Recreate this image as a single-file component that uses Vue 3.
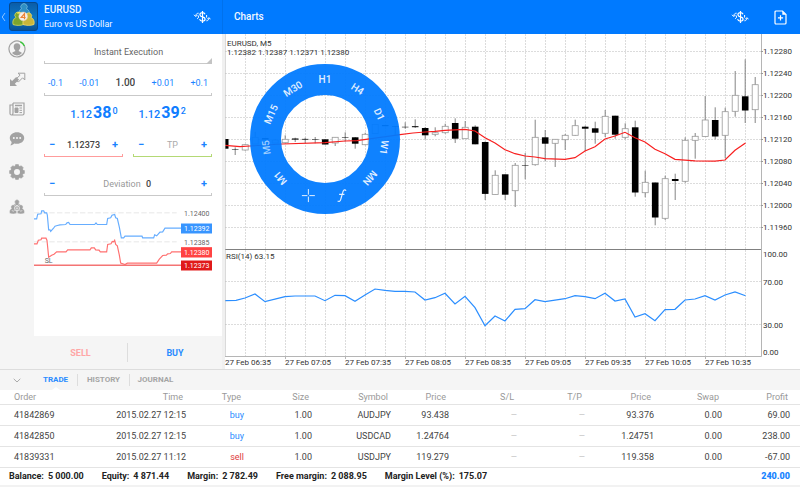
<script setup>
import { ref } from 'vue'

const volume = ref('1.00')
const stopLoss = ref('1.12373')
const takeProfit = ref('')
const deviation = ref('0')
const activeTab = ref('Trade')

const volumeSteps = {
  down: ['-0.1', '-0.01'],
  up: ['+0.01', '+0.1'],
}

const tabs = ['Trade', 'History', 'Journal']
const columns = ['Order', 'Time', 'Type', 'Size', 'Symbol', 'Price', 'S/L', 'T/P', 'Price', 'Swap', 'Profit']
const orders = [
  { id: '41842869', time: '2015.02.27 12:15', type: 'buy', size: '1.00', symbol: 'AUDJPY', open: '93.438', price: '93.376', swap: '0.00', profit: '69.00' },
  { id: '41842850', time: '2015.02.27 12:15', type: 'buy', size: '1.00', symbol: 'USDCAD', open: '1.24764', price: '1.24751', swap: '0.00', profit: '238.00' },
  { id: '41839331', time: '2015.02.27 11:12', type: 'sell', size: '1.00', symbol: 'USDJPY', open: '119.279', price: '119.358', swap: '0.00', profit: '-67.00' },
]
const summary = [
  ['Balance:', '5 000.00'],
  ['Equity:', '4 871.44'],
  ['Margin:', '2 782.49'],
  ['Free margin:', '2 088.95'],
  ['Margin Level (%):', '175.07'],
]

const wheel = ['H1', 'H4', 'D1', 'W1', 'MN', 'function', 'crosshair', 'M1', 'M5', 'M15', 'M30'].map((name, i) => ({
  name,
  angle: (i * 360) / 11,
}))

const gridX = Array.from({ length: 26 }, (_, i) => 245 + i * 20)
const priceLevels = ['1.12280', '1.12240', '1.12200', '1.12160', '1.12120', '1.12080', '1.12040', '1.12000', '1.11960'].map(
  (label, i) => ({ label, y: 51.5 + i * 22 }),
)
const rsiLevels = [
  { label: '100.00', y: 254 },
  { label: '70.00', y: 281.5 },
  { label: '30.00', y: 324.5 },
  { label: '0.00', y: 352 },
]
const times = ['06:35', '07:05', '07:35', '08:05', '08:35', '09:05', '09:35', '10:05', '10:35'].map((t, i) => ({
  label: '27 Feb ' + t,
  x: 225 + i * 60,
}))

// [filled, high, body top, body bottom, low]
const candles = [
  [1, 139, 139, 148.7, 148.7], [1, 147.3, 149.3, 149.8, 155], [0, 144, 144.7, 150, 150.7], [0, 131.7, 137.3, 144, 144],
  [1, 138, 138, 139.5, 139.5], [0, 139, 140, 143, 143], [0, 135.3, 139.3, 142.7, 143.3], [1, 137.7, 138.5, 139.6, 142],
  [1, 137.7, 138.9, 139.6, 143.3], [1, 137, 139.4, 139.9, 143.3], [1, 139.3, 139.3, 144.5, 144.5], [0, 137.3, 137.3, 143, 146],
  [1, 132.3, 137.2, 137.7, 141.7], [1, 137, 137.3, 143.7, 148.7], [0, 132.7, 134.3, 144.7, 145.3], [0, 124.3, 124.3, 133.5, 133.5],
  [1, 125, 125, 126.2, 126.2], [1, 126, 126, 126.6, 135], [1, 122.3, 126.8, 127.3, 128.7], [1, 119.3, 126.2, 127.2, 128],
  [1, 127, 128, 135.3, 139.3], [0, 127.3, 132.7, 134.3, 136.3], [0, 123.7, 126.3, 132.7, 133.7], [1, 118.3, 123, 138.7, 143],
  [0, 121, 127.3, 138.7, 138.7], [1, 125.3, 126.7, 144.3, 144.3], [1, 141.3, 142, 193.9, 200], [0, 170.3, 175.3, 194.5, 194.5],
  [1, 174.3, 174.3, 194.7, 200], [0, 163, 165.3, 190.7, 207], [1, 153, 165, 165.5, 179.3], [0, 119.7, 137.3, 164.7, 165.7],
  [1, 130, 137.3, 143.7, 161], [0, 139.3, 139.3, 143.3, 167], [0, 134, 135.3, 139.7, 150], [0, 119.7, 125.7, 135.3, 135.7],
  [1, 125.7, 126.7, 128.7, 151], [1, 121.7, 128.3, 132.7, 143.7], [0, 110, 116.3, 133.3, 137], [1, 115.7, 115.7, 134.7, 138.7],
  [0, 123.3, 128.7, 137.3, 139.3], [1, 120.7, 127.3, 192.5, 196.7], [0, 170.7, 182.3, 192.7, 197.3], [1, 182.5, 182.5, 217.5, 225.3],
  [0, 175.7, 178.7, 218.3, 220], [1, 173.7, 179, 181, 200], [0, 137.3, 140.3, 181.3, 182.7], [0, 133, 136.3, 140.3, 158.7],
  [0, 96, 120, 136.5, 136.5], [1, 107.3, 120, 136.5, 139.3], [0, 107.7, 111.7, 135.3, 158.3], [0, 71, 95.3, 111.3, 116.7],
  [1, 59.3, 96.3, 110.5, 123], [0, 77, 84.7, 109.7, 123],
].map(([filled, high, top, bottom, low], i) => ({ filled, high, top, bottom, low, x: 225.2 + i * 10 }))

const average =
  '225,145.3 240,146.7 250,146 282,144 325,142.7 345,141 357,140.7 400,134.7 413,133 425,132 435,131.3 445,130.3 465,129.3 475,131 485,137.7 495,143 505,149.7 515,153.7 525,156 535,157 545,158.7 565,159.3 575,157.7 585,151 595,146.7 605,139 615,136 625,132.3 635,137.7 645,142 655,149.3 665,153.7 675,159.3 695,160.8 715,161.2 725,160 735,150.3 745.5,143'
const rsi =
  '225,300.7 236,300.3 245,298 255,294 265,301.7 285,296.7 295,296 315,296 325,300.7 335,295.3 345,295.7 355,301.3 365,295 375,289 385,290.3 395,291.3 405,291.3 415,292 425,300 435,297.7 445,293.3 455,304 465,296.3 475,307.7 485,325.7 495,316 505,321 515,309.3 525,308.7 535,299.7 545,301.7 565,298.7 575,295.7 585,296.7 595,298.7 605,293.3 615,301 625,299 635,317 645,313.7 655,320.7 665,309.7 675,309.3 685,300 695,299 705,295.7 715,300 725,295 735,292 745.5,295.7'
const askTicks =
  '102,73 110,73 113,59 123,58 125,49 131,49 134,55 140,55 142,62 146,106 150,106 152,111 160,102 165,95 172,93 180,91 197,90 201,85 206,84 210,90 284,90 288,85 292,90 320,90 323,72 332,70 336,62 344,60 347,70 352,72 358,98 364,130 371,130 375,125 426,125 428,130 461,130 464,121 470,124 480,113 488,112 495,101 543,101'
const bidTicks =
  '102,148 111,148 115,137 123,136 125,131 138,131 141,138 146,188 155,182 162,179 170,172 198,172 203,166 270,166 274,160 283,160 287,166 297,167 301,172 320,172 323,150 333,148 337,141 341,142 344,137 347,150 352,154 358,182 362,206 375,210 382,206 470,206 478,194 488,183 499,182 503,178 511,177 515,172 543,172'
</script>

<template>
  <div class="app">
    <header class="topbar">
      <div class="instrument">
        <button class="back" aria-label="Back">
          <svg width="5" height="10" viewBox="0 0 5 10"><path d="M4 1 1.2 5 4 9" fill="none" stroke="#8cc4ff" stroke-width="1" /></svg>
        </button>
        <svg class="logo" width="29" height="29" viewBox="0 0 29 29">
          <defs>
            <linearGradient id="tile" x1="0" y1="0" x2="0" y2="1">
              <stop offset="0" stop-color="#0a5ca8" />
              <stop offset=".55" stop-color="#0e78c4" />
              <stop offset="1" stop-color="#075094" />
            </linearGradient>
          </defs>
          <rect x=".5" y=".5" width="28" height="28" rx="2.500" fill="url(#tile)" stroke="#06488c" />
          <path d="M9.500 15c-.5-4.500.8-7 3-8.200a3.200 3.200 0 1 1 5 0c2.800 1.200 3.700 4 3 8.200z" fill="#2f8fc4" stroke="#8cc8e0" stroke-width=".6" />
          <path d="M4 22.500c-.8-3.500.6-6 3-7a3 3 0 1 1 4.600-1.200c2.500 1.200 3.700 4 3 8.200-3 1.200-8 1.200-10.600 0z" fill="#7da52e" stroke="#d9db5c" stroke-width=".8" />
          <path d="M14 22.500c-.6-3.500.8-6 3.200-7.200a2.900 2.900 0 1 1 4.800.2c2.500 1 3.700 3.500 3 7-3 1.200-8.300 1.200-11 0z" fill="#c9b63a" stroke="#f3dc6a" stroke-width=".8" />
          <path d="M8.500 11.500c1.200-1.500 3-1.200 3.500 0" fill="none" stroke="#f5e45e" stroke-width="1.500" />
          <circle cx="14.200" cy="14.400" r="4.400" fill="#f6efe6" stroke="#ddcdb8" stroke-width=".5" />
          <path d="M15.500 17.200v-5.500l-3.300 3.800h4.400" fill="none" stroke="#ec8334" stroke-width="1.200" />
        </svg>
        <div class="names">
          <h1>EURUSD</h1>
          <p>Euro vs US Dollar</p>
        </div>
        <button class="icon-button" aria-label="Switch symbol">
          <svg width="18" height="14" viewBox="0 0 18 14" fill="none" stroke="#fff">
            <path d="M12 4.300C11.600 3.200 10.600 2.700 9.400 2.700c-1.500 0-2.500.8-2.500 2 0 2.900 5.200 1.600 5.200 4.300 0 1.300-1.200 2.100-2.700 2.100-1.400 0-2.500-.7-2.800-2M9.500 1v12" stroke-width="1.200" />
            <path d="M5.600 3.200C4 3.200 3 4 2.800 5.800M1 4.800l1.800 1.800 1.800-1.800M5.400 5.600v2.200l-1.200 1M13.400 10.800c1.600 0 2.400-1 2.500-2.600M14.200 9.300l1.700-1.700 1.600 1.700M13.600 5v2.600" />
          </svg>
        </button>
      </div>
      <div class="chart-head">
        <h2>Charts</h2>
        <button class="icon-button" aria-label="Select symbol">
          <svg width="18" height="14" viewBox="0 0 18 14" fill="none" stroke="#fff">
            <path d="M12 4.300C11.600 3.200 10.600 2.700 9.400 2.700c-1.500 0-2.500.8-2.500 2 0 2.900 5.200 1.600 5.200 4.300 0 1.300-1.200 2.100-2.700 2.100-1.400 0-2.500-.7-2.800-2M9.500 1v12" stroke-width="1.200" />
            <path d="M5.600 3.200C4 3.200 3 4 2.800 5.800M1 4.800l1.800 1.800 1.800-1.800M5.400 5.600v2.200l-1.200 1M13.400 10.800c1.600 0 2.400-1 2.500-2.600M14.200 9.300l1.700-1.700 1.600 1.700M13.600 5v2.600" />
          </svg>
        </button>
        <button class="icon-button" aria-label="New chart">
          <svg width="13" height="15" viewBox="0 0 13 15" fill="none" stroke="#fff" stroke-width="1.200">
            <path d="M2 1h6.500L12 4.500V13a1 1 0 0 1-1 1H2a1 1 0 0 1-1-1V2a1 1 0 0 1 1-1zM6.500 5.200v5.200M3.900 7.800h5.200" />
            <path d="M8.300 1v3.700H12z" fill="#fff" stroke="none" />
          </svg>
        </button>
      </div>
    </header>

    <main class="workspace">
      <nav class="sidebar" aria-label="Sections">
        <button aria-label="Account">
          <svg width="18" height="18" viewBox="0 0 18 18">
            <path d="M12.300 1.700A8 8 0 1 0 16.400 6" fill="none" stroke="#a2a2a2" stroke-width="1.200" />
            <path d="M12.300 1.700A8 8 0 0 1 16.400 6" fill="none" stroke="#38c138" stroke-width="1.500" />
            <path d="M9 3.300c2.200 0 3.300 1.500 3.300 3.500 0 1.500-.6 2.800-1.500 3.500v1c1.200.5 2.500.8 3.200 1.700A6.300 6.300 0 0 1 9 15.500 6.300 6.300 0 0 1 4 13c.7-.9 2-1.200 3.200-1.700v-1C6.300 9.600 5.700 8.300 5.700 6.800c0-2 1.100-3.500 3.300-3.500z" fill="#a2a2a2" />
          </svg>
        </button>
        <button aria-label="Trade">
          <svg width="17" height="15" viewBox="0 0 17 15">
            <path d="M9 1.200h6.800V8l-2.200-2.200-4.300 4.300-2.700-2.700 4.500-4.200z" fill="#f5f5f5" stroke="#a2a2a2" />
            <path d="M1 7v7h7l-2.200-2.300 4.300-4L7.200 4.900 3.100 9z" fill="#a2a2a2" />
          </svg>
        </button>
        <button aria-label="News">
          <svg width="16" height="14" viewBox="0 0 16 14" fill="none" stroke="#a2a2a2">
            <path d="M4 1h11v10.500q0 1.500-1.500 1.500h-11Q1 13 1 11.500V3h2.500M4 1v10q0 2-1.500 2" stroke-width="1.200" />
            <path d="M6 3.500h7" stroke-width="1.500" />
            <path d="M6 6h3v4.500H6z" fill="#a2a2a2" />
            <path d="M10.500 6H13M10.500 8.300H13M10.500 10.600H13" />
          </svg>
        </button>
        <button aria-label="Messages">
          <svg width="16" height="16" viewBox="0 0 16 16">
            <path d="M8 1.200c4 0 7.200 2.500 7.200 5.800S12 12.800 8 12.800c-1 0-2-.1-2.800-.4-1 1-2.400 1.800-3.900 1.900.8-.9 1.300-2 1.300-3.300C1.400 9.900.8 8.500.8 7 .8 3.700 4 1.200 8 1.200z" fill="#a2a2a2" />
            <circle v-for="x in [4.8, 8, 11.2]" :key="x" :cx="x" cy="7" r="1" fill="#f5f5f5" />
          </svg>
        </button>
        <button class="tall" aria-label="Settings">
          <svg width="16" height="16" viewBox="0 0 16 16">
            <circle cx="8" cy="8" r="4.600" fill="none" stroke="#a2a2a2" stroke-width="3.200" />
            <path v-for="n in 8" :key="n" d="M6 2.500 6.600.6h2.800L10 2.500z" fill="#a2a2a2" stroke="#a2a2a2" stroke-width=".6" :transform="`rotate(${n * 45} 8 8)`" />
          </svg>
        </button>
        <button class="tall" aria-label="Community">
          <svg width="16" height="16" viewBox="0 0 16 16" fill="#a2a2a2" stroke="#f5f5f5" stroke-width=".4">
            <path d="M4.300 8.500c-.2-2 .6-3.300 2-4a2.300 2.300 0 1 1 3.400 0c1.400.7 2.200 2 2 4z" />
            <path d="M.6 14.300c-.4-2.300.4-4 1.900-4.800a2.200 2.200 0 1 1 3.200 0c1.500.8 2.300 2.500 2 4.800-2 .8-5 .8-7.100 0z" />
            <path d="M8.300 14.300c-.3-2.300.5-4 2-4.800a2.200 2.200 0 1 1 3.200 0c1.500.8 2.300 2.500 1.900 4.800-2.100.8-5.100.8-7.100 0z" />
            <circle cx="8" cy="9.300" r="2.500" stroke-width=".8" />
            <path d="M8 7.700v3.200M6.500 9.300h3M6.300 5.500 8 7l1.700-1.500M2.800 11l1.400 1.500L5.600 11M10.500 11l1.400 1.500 1.400-1.500" fill="none" stroke-width=".6" />
          </svg>
        </button>
      </nav>

      <section class="order-panel" aria-label="New order">
        <div class="fields">
          <div class="field execution">
            <select aria-label="Execution type">
              <option>Instant Execution</option>
            </select>
            <div class="rule"></div>
            <svg class="corner" width="6" height="6" viewBox="0 0 6 6"><path d="M6 0v6H0z" fill="#c4c4c4" /></svg>
          </div>
          <div class="field volume">
            <div class="volume-row">
              <button v-for="s in volumeSteps.down" :key="s">{{ s }}</button>
              <input v-model="volume" aria-label="Volume" />
              <button v-for="s in volumeSteps.up" :key="s">{{ s }}</button>
            </div>
            <div class="rule"></div>
          </div>
          <div class="quotes">
            <p class="quote">1.12<b>38</b><sup>0</sup></p>
            <p class="quote">1.12<b>39</b><sup>2</sup></p>
          </div>
          <div class="limits">
            <div class="field">
              <div class="stepper">
                <button aria-label="Decrease stop loss">−</button>
                <input v-model="stopLoss" class="strong" aria-label="Stop loss" />
                <button aria-label="Increase stop loss">+</button>
              </div>
              <div class="rule red"></div>
            </div>
            <div class="field">
              <div class="stepper">
                <button aria-label="Decrease take profit">−</button>
                <input v-model="takeProfit" placeholder="TP" aria-label="Take profit" />
                <button aria-label="Increase take profit">+</button>
              </div>
              <div class="rule green"></div>
            </div>
          </div>
          <div class="field deviation">
            <div class="stepper">
              <button aria-label="Decrease deviation">−</button>
              <div class="deviation-value">
                <label for="deviation">Deviation</label>
                <input id="deviation" v-model="deviation" class="strong" />
              </div>
              <button aria-label="Increase deviation">+</button>
            </div>
            <div class="rule"></div>
          </div>
        </div>

        <svg class="ticks" viewBox="102 6 564 417" role="img" aria-label="Tick chart">
          <path d="M102 55H530M102 142H530" stroke="#e2e2e2" stroke-width="2.500" stroke-dasharray="16 7" />
          <g fill="none" stroke-width="3.500">
            <polyline :points="askTicks" stroke="#66adff" />
            <polyline :points="bidTicks" stroke="#ff7070" />
            <path d="M102 212H543" stroke="#f47474" stroke-width="4.500" />
          </g>
          <path d="M543 87h93v30h-93z" fill="#3895ff" />
          <path d="M543 158h93v31h-93z" fill="#ff4343" />
          <path d="M543 198h93v30h-93z" fill="#e01a1a" />
          <g class="tick-labels">
            <text x="552" y="63">1.12400</text>
            <text x="552" y="150">1.12385</text>
            <text x="134" y="206">SL</text>
            <g class="on-color">
              <text x="552" y="110">1.12392</text>
              <text x="552" y="181">1.12380</text>
              <text x="552" y="221">1.12373</text>
            </g>
          </g>
        </svg>

        <div class="deal">
          <button class="sell" disabled>SELL</button>
          <button class="buy">BUY</button>
        </div>
      </section>

      <section class="chart" aria-label="EURUSD, M5 chart">
        <svg class="plot" viewBox="225 34 575 335">
          <g stroke="#dcdcdc" stroke-width="1" stroke-dasharray="2 1">
            <path v-for="x in gridX" :key="x" :d="`M${x + 0.5} 34V356`" />
            <path v-for="l in priceLevels" :key="l.label" :d="`M225 ${l.y}H761`" />
            <path d="M225 281.500H761M225 324.500H761" />
          </g>
          <g v-for="c in candles" :key="c.x">
            <path :d="`M${c.x} ${c.high}V${c.low}`" stroke="#777" stroke-width=".9" />
            <rect v-if="c.filled" :x="c.x - 3.3" :y="c.top" width="6.600" :height="c.bottom - c.top" fill="#000" />
            <rect v-else :x="c.x - 3" :y="c.top" width="6" :height="c.bottom - c.top" fill="#fff" stroke="#999" stroke-width=".8" />
          </g>
          <polyline :points="average" fill="none" stroke="#f81f1f" stroke-width="1.200" />
          <polyline :points="rsi" fill="none" stroke="#2b8eff" stroke-width="1.200" />
          <path d="M225 249.500H761" stroke="#808080" />
          <path d="M225 34V356.500H761.500V34M285.500 356v3M345.500 356v3M405.500 356v3M465.500 356v3M525.500 356v3M585.500 356v3M645.500 356v3M705.500 356v3" fill="none" stroke="#b5b5b5" />
          <path v-for="l in priceLevels" :key="l.label" :d="`M761 ${l.y}h2`" stroke="#999" />
          <g class="plot-labels">
            <text x="227" y="46">EURUSD, M5</text>
            <text x="227" y="55">1.12382 1.12387 1.12371 1.12380</text>
            <text x="226" y="259">RSI(14) 63.15</text>
            <text v-for="l in priceLevels" :key="l.label" x="763" :y="l.y + 2.5">{{ l.label }}</text>
            <text v-for="l in rsiLevels" :key="l.label" x="763" :y="l.y + 3">{{ l.label }}</text>
            <text v-for="t in times" :key="t.label" :x="t.x" y="365">{{ t.label }}</text>
          </g>
        </svg>
        <div class="wheel">
          <button
            v-for="w in wheel"
            :key="w.name"
            :class="{ current: w.name === 'M5' }"
            :aria-label="w.name"
            :style="{ transform: `rotate(${w.angle}deg) translateY(-59px)` }"
          >
            <svg v-if="w.name === 'function'" width="14" height="14" viewBox="-7 -7 14 14" fill="none" stroke="#e3f0ff" stroke-width="1.200">
              <g :transform="`rotate(${-w.angle})`"><path d="M4.500-5C3-6.600 1.700-5.400 1.200-3.400L-.8 3.500C-1.300 5.600-2.600 6.600-4 5.300M-2.500-1.200h5.300" /></g>
            </svg>
            <svg v-else-if="w.name === 'crosshair'" width="14" height="14" viewBox="-7 -7 14 14" stroke="#e3f0ff">
              <g :transform="`rotate(${-w.angle})`"><path d="M0-6.500V-1M0 1v5.500M-6.500 0H-1M1 0h5.500" /></g>
            </svg>
            <template v-else>{{ w.name }}</template>
          </button>
        </div>
      </section>
    </main>

    <section class="terminal" aria-label="Terminal">
      <div class="tabs">
        <button class="collapse" aria-label="Collapse">
          <svg width="8" height="5" viewBox="0 0 8 5"><path d="M.7.8 4 4 7.300.8" fill="none" stroke="#aaa" /></svg>
        </button>
        <button v-for="t in tabs" :key="t" class="tab" :class="{ active: t === activeTab }" @click="activeTab = t">{{ t }}</button>
      </div>
      <table>
        <colgroup>
          <col v-for="(c, i) in columns" :key="i" :class="'col-' + i" />
        </colgroup>
        <thead>
          <tr>
            <th v-for="(c, i) in columns" :key="i">{{ c }}</th>
          </tr>
        </thead>
        <tbody>
          <tr v-for="o in orders" :key="o.id">
            <td>{{ o.id }}</td>
            <td>{{ o.time }}</td>
            <td :class="o.type">{{ o.type }}</td>
            <td>{{ o.size }}</td>
            <td>{{ o.symbol }}</td>
            <td>{{ o.open }}</td>
            <td class="none">—</td>
            <td class="none">—</td>
            <td>{{ o.price }}</td>
            <td>{{ o.swap }}</td>
            <td>{{ o.profit }}</td>
          </tr>
        </tbody>
      </table>
      <div class="summary">
        <span v-for="s in summary" :key="s[0]" class="item"><span>{{ s[0] }}</span><span>{{ s[1] }}</span></span>
        <strong>240.00</strong>
      </div>
    </section>
  </div>
</template>

<style>
body {
  background: #f2f2f2;
}
</style>

<style scoped>
.app {
  font: 9px/12px Roboto, "Liberation Sans", sans-serif;
  color: #444;
}
.app * {
  box-sizing: border-box;
}
button,
input,
select {
  margin: 0;
  padding: 0;
  border: 0;
  background: none;
  font: inherit;
  color: inherit;
  appearance: none;
}
h1,
h2,
p {
  margin: 0;
  font-size: 10px;
  font-weight: 500;
}
svg {
  display: block;
}

.topbar {
  display: flex;
  height: 34px;
  background: #007aff;
  color: #f2f8ff;
}
.instrument {
  display: flex;
  align-items: center;
  width: 223px;
  padding: 0 11px 0 1px;
  border-right: 1px solid #0071ec;
}
.logo {
  margin: 0 6px 2px 3px;
}
.names {
  flex: 1;
}
.names h1,
.names p {
  line-height: 14px;
}
.names p {
  font-size: 9px;
  font-weight: 400;
}
.icon-button {
  display: flex;
  align-items: center;
}
.chart-head {
  flex: 1;
  display: flex;
  align-items: center;
  gap: 25px;
  padding: 0 13px 0 11px;
}
.chart-head h2 {
  flex: 1;
}

.workspace {
  display: flex;
}
.sidebar {
  display: flex;
  flex-direction: column;
  width: 34px;
  background: #f5f5f5;
}
.sidebar button {
  display: flex;
  align-items: center;
  justify-content: center;
  height: 30px;
}
.sidebar .tall {
  height: 35px;
}

.order-panel {
  display: flex;
  flex-direction: column;
  width: 191px;
  background: #fff;
  border-right: 3px solid #f0f0f0;
}
.fields {
  padding: 8px 10px 0;
}
.field {
  position: relative;
}
.rule {
  height: 3px;
  border: 1px solid #c9c9c9;
  border-top: 0;
}
.rule.red {
  border-color: #ff9c9c;
}
.rule.green {
  border-color: #b4d975;
}
.execution select {
  width: 100%;
  height: 19px;
  padding-left: 1px;
  text-align: center;
  text-align-last: center;
  color: #666;
}
.corner {
  position: absolute;
  right: 0;
  bottom: 0;
}
.volume-row {
  display: flex;
  justify-content: space-between;
  align-items: center;
  height: 29px;
  padding: 9px 4px 0;
  color: #1a84ff;
}
.volume-row input {
  width: 20px;
  font-size: 10px;
  font-weight: 500;
  text-align: center;
  color: #444;
}
.quotes {
  display: flex;
  justify-content: center;
  gap: 21px;
  height: 38px;
  padding-top: 6px;
  color: #0f7dff;
}
.quote {
  display: flex;
  align-items: baseline;
  gap: 1px;
  font-size: 11px;
  line-height: 22px;
}
.quote b {
  font-size: 16px;
}
.quote sup {
  align-self: flex-start;
  font-size: 9px;
  line-height: 18px;
}
.limits {
  display: grid;
  grid-template-columns: 1fr 1fr;
  gap: 10px;
}
.stepper {
  display: flex;
  align-items: center;
  justify-content: space-between;
  height: 20px;
  padding: 2px 4px 0;
}
.stepper button {
  width: 8px;
  font-size: 11px;
  font-weight: 700;
  color: #1a84ff;
}
.stepper input {
  width: 48px;
  text-align: center;
}
.stepper .strong {
  font-weight: 500;
  color: #444;
}
.stepper input::placeholder {
  color: #aaa;
}
.deviation {
  margin-top: 16px;
}
.deviation-value {
  display: flex;
  gap: 4px;
  color: #999;
}
.deviation-value input {
  width: 8px;
}
.ticks {
  flex: 1;
  width: 100%;
}
.tick-labels {
  font-size: 21px;
  fill: #666;
}
.on-color {
  fill: #fff;
}
.deal {
  display: grid;
  grid-template-columns: 1fr 1fr;
  height: 33px;
  padding: 7px 0;
  background: #f5f5f5;
  font-weight: 700;
}
.sell {
  color: #ffa6a6;
  border-right: 1px solid #ddd;
}
.buy {
  color: #1a84ff;
}

.chart {
  position: relative;
  flex: 1;
  min-width: 0;
  background: #fff;
}
.plot {
  width: 100%;
  height: auto;
}
.plot-labels {
  font-size: 8px;
  fill: #333;
}
.wheel {
  position: absolute;
  left: 25px;
  top: 30px;
  display: grid;
  place-items: center;
  width: 150px;
  height: 150px;
  border: 31px solid rgba(0, 122, 255, 0.94);
  border-radius: 50%;
}
.wheel button {
  grid-area: 1 / 1;
  font-size: 10px;
  font-weight: 500;
  color: #e3f0ff;
}
.wheel .current {
  color: #9fceff;
}

.terminal {
  background: #fff;
  border-bottom: 3px solid #f2f2f2;
}
.tabs {
  display: flex;
  align-items: center;
  height: 21px;
  background: #f5f5f5;
  border-top: 1px solid #ddd;
}
.collapse {
  display: flex;
  justify-content: center;
  width: 34px;
}
.tab {
  position: relative;
  width: 52px;
  height: 12px;
  font-size: 8px;
  font-weight: 700;
  text-transform: uppercase;
  color: #a5a5a5;
  border-left: 1px solid #ddd;
}
.tab:nth-child(2) {
  width: 43px;
  border-left: 0;
}
.tab.active {
  color: #2a8cff;
}
.tab.active::after {
  content: "";
  position: absolute;
  left: 50%;
  bottom: -4px;
  margin-left: -4px;
  border: 4px solid transparent;
  border-top: 0;
  border-bottom: 3px solid #fff;
}
table {
  width: 100%;
  table-layout: fixed;
  border-collapse: collapse;
  text-align: right;
}
.col-0 { width: 100px; }
.col-1 { width: 86px; }
.col-2 { width: 58px; }
.col-3 { width: 68px; }
.col-4 { width: 79px; }
.col-5 { width: 58px; }
.col-6 { width: 68px; }
.col-7 { width: 68px; }
.col-8 { width: 69px; }
.col-9 { width: 68px; }
.col-10 { width: 78px; }
th,
td {
  height: 21px;
  padding: 0;
  border-bottom: 1px solid #e4e4e4;
}
th {
  height: 14px;
  padding-right: 3px;
  font-weight: 400;
  color: #999;
}
th:first-child,
td:first-child {
  padding-left: 14px;
  text-align: left;
}
td:last-child {
  padding-right: 10px;
}
th:last-child {
  padding-right: 12px;
}
.buy {
  color: #2a8cff;
}
td.sell {
  color: #e03c3c;
  border-right: 0;
}
.none {
  font-size: 8px;
  color: #b8b8b8;
}
.summary {
  display: flex;
  align-items: center;
  gap: 18px;
  height: 17px;
  padding: 0 10px 0 9px;
  font-weight: 700;
  color: #222;
}
.item {
  display: flex;
  gap: 4px;
}
.summary strong {
  margin-left: auto;
  color: #1a84ff;
}
</style>
